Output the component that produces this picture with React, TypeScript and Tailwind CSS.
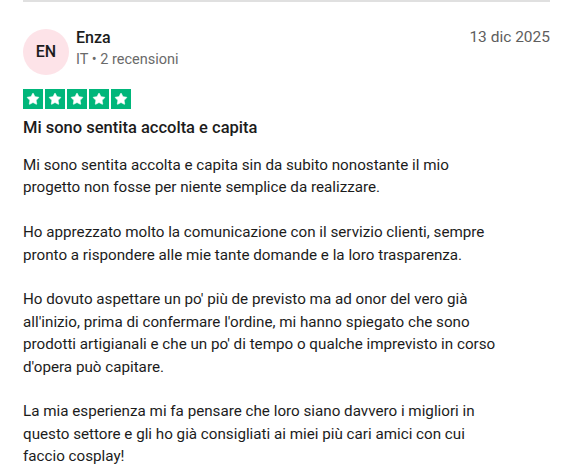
import { Star } from "lucide-react";

const paragraphs = [
  "Mi sono sentita accolta e capita sin da subito nonostante il mio progetto non fosse per niente semplice da realizzare.",
  "Ho apprezzato molto la comunicazione con il servizio clienti, sempre pronto a rispondere alle mie tante domande e la loro trasparenza.",
  "Ho dovuto aspettare un po' più de previsto ma ad onor del vero già all'inizio, prima di confermare l'ordine, mi hanno spiegato che sono prodotti artigianali e che un po' di tempo o qualche imprevisto in corso d'opera può capitare.",
  "La mia esperienza mi fa pensare che loro siano davvero i migliori in questo settore e gli ho già consigliati ai miei più cari amici con cui faccio cosplay!",
];

export default function App() {
  return (
    <div className="min-h-screen bg-white text-[#1c1c1c]" style={{ fontFamily: 'Roboto, "Liberation Sans", Arial, sans-serif' }}>
      <div className="mx-[23px] border-t-2 border-[#e0e0e0]" />
      <article className="px-[23px] pt-[25px]">
        {/* Header */}
        <div className="flex items-start justify-between">
          <div className="flex items-center gap-[7px]">
            <div className="mt-[2px] flex h-[46px] w-[46px] items-center justify-center rounded-full bg-[#fde3e8] text-[16px] font-medium">
              EN
            </div>
            <div className="-mt-[4px] flex flex-col">
              <span className="text-[16px] font-medium leading-[22px]">Enza</span>
              <span className="text-[14.5px] leading-[22px] text-[#6a6a6a]">IT • 2 recensioni</span>
            </div>
          </div>
          <span className="-mt-[1px] text-[15.5px] leading-[22px] text-[#5e5e5e]">13 dic 2025</span>
        </div>

        {/* Stars */}
        <div className="mt-[14px] flex gap-[2px]">
          {[0, 1, 2, 3, 4].map((i) => (
            <div key={i} className="flex h-[20px] w-[20px] items-center justify-center bg-[#00b67a]">
              <Star className="h-[14px] w-[14px] fill-white text-white" strokeWidth={1} />
            </div>
          ))}
        </div>

        {/* Title */}
        <h2 className="mt-[8px] text-[16.5px] font-medium leading-[22px]">Mi sono sentita accolta e capita</h2>

        {/* Body */}
        <div className="mt-[15px] w-[476px] text-[15.2px] leading-[22.4px]">
          {paragraphs.map((p, i) => (
            <p key={i} className={i > 0 ? "mt-[22.4px]" : ""}>
              {p}
            </p>
          ))}
        </div>
      </article>
    </div>
  );
}
